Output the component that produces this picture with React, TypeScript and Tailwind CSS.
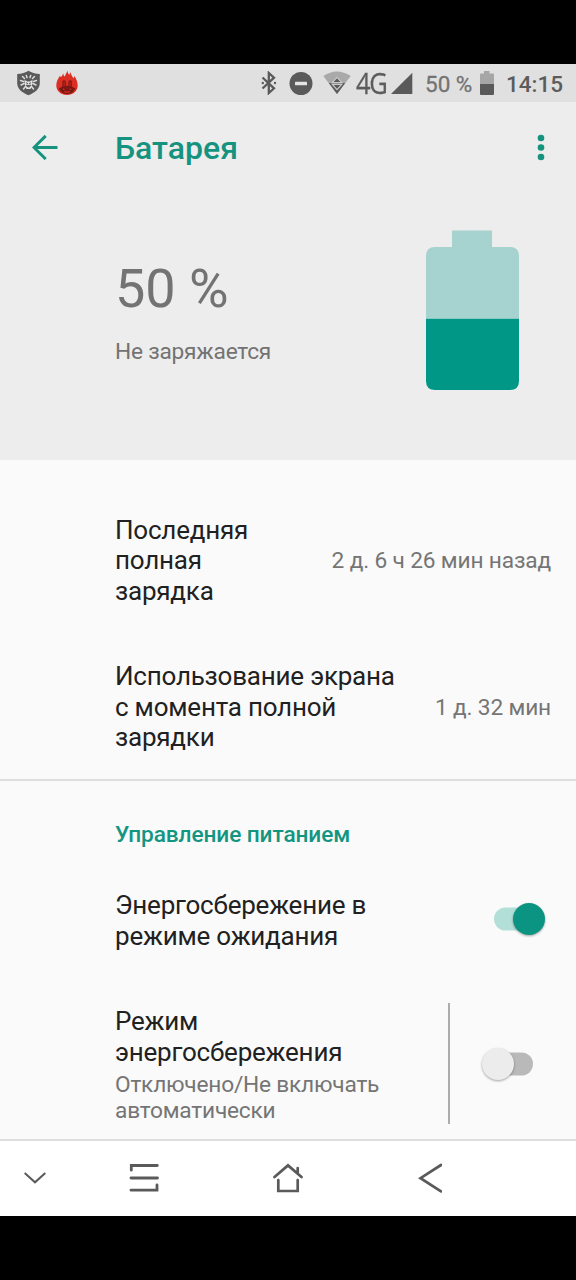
import React from "react";

function StatusBar() {
  return (
    <div className="flex h-[38px] items-center bg-[#e0e0e0] pl-4 text-[#5c5c5c]">
      <svg className="h-[26px] w-[26px] shrink-0" viewBox="0 0 26 26">
        <path d="M12.500.7C9.600 2.800 5.600 3.800 1.200 3.900V13c0 6 4.800 9.600 11.300 12.300C19 22.600 23.800 19 23.800 13V3.900C19.400 3.800 15.400 2.800 12.500.7Z" fill="#5a5a5a" />
        <path d="M6.500 6.500l2 2M18.500 6.500l-2 2M4.500 10.500l3 1M20.500 10.500l-3 1M5 15l3-1.500M20 15l-3-1.500M7.500 19l2-2.500M17.500 19l-2-2.500M10.300 5.500l.7 2M14.700 5.500l-.7 2" stroke="#dcdcdc" strokeWidth="1.500" strokeLinecap="round" />
        <path d="M8.500 10l3 1.500h2l3-1.500-.3 5-1.700 4h-4l-1.700-4Z" fill="#e4e4e4" />
        <path d="M10 12.800l2 .8M15 12.800l-2 .8M10 15.300q2.500 3.500 5 0Z" stroke="#5a5a5a" strokeWidth="1" fill="#5a5a5a" />
      </svg>
      <svg className="ml-[13px] h-[26px] w-6 shrink-0" viewBox="0 0 24 26">
        <path d="M12.500.6c-.8 2.500-2 3.800-2.700 5.800C8.900 6 8.300 4.800 8.200 3.200 7.600 5.200 6.800 6.200 5.800 7.200 5.400 6.800 5.200 6.200 5.100 5.600 3.200 8.500 1.300 11.500 1.300 15.500 1.300 21 6 25 12 25s10.700-4 10.700-9.500c0-3.500-1.400-6.500-3.200-9.500-.2 1-.6 1.700-1.100 2.200C17.500 6.500 15.900 5 15.500 2.300c-.7.800-1.100 1.800-1.200 2.700C13.200 4 12.500 2.400 12.500.6Z" fill="#dc2f24" />
        <path d="M8 17V12.500q0-1.500 1-1.500t1.200 1.500V17M14 17V12.500q.2-1.500 1.200-1.500t1 1.500V17" stroke="#7a1813" strokeWidth="1.300" fill="none" strokeLinecap="round" />
        <path d="M3.800 18.500q3.500-2.700 8.300-2.700t8.300 2.700q-2.500 5.500-8.300 5.500t-8.300-5.500Z" fill="#7a1813" />
        <path d="M8 18.700l1.500.8M16.200 18.700l-1.500.8M9 21.500q3 1.200 6 0" stroke="#dc2f24" strokeWidth="1.100" fill="none" />
      </svg>
      <div className="flex flex-1 items-center">
        <svg className="ml-[182px] h-6 w-[16px] shrink-0" viewBox="0 0 16 24">
          <path d="M1.500 6.500L13 17.300 7.800 22V2L13 6.700 1.500 17.500" fill="none" stroke="#5a5a5a" strokeWidth="2.300" />
          <circle cx="1.800" cy="12" r="1.200" fill="#5a5a5a" />
          <circle cx="14" cy="12" r="1.200" fill="#5a5a5a" />
        </svg>
        <svg className="ml-3 h-6 w-6 shrink-0" viewBox="0 0 24 24">
          <circle cx="12" cy="12.500" r="11.500" fill="#5a5a5a" />
          <rect x="6" y="10.700" width="12" height="3.600" rx=".6" fill="#e4e4e4" />
        </svg>
        <svg className="ml-[10px] h-6 w-7 shrink-0" viewBox="0 0 28 24">
          <path d="M.3 5Q14-4 27.700 5L14 23Z" fill="#a9a9a9" />
          <path d="M5.800 12h16.400L14 23Z" fill="#5a5a5a" />
          <path d="M14 6.300L18.700 11.600H9.300ZM9.300 13.300h9.400L14 18.600Z" fill="#5a5a5a" stroke="#c9c9c9" strokeWidth="1.200" />
        </svg>
        <span className="ml-[5px] w-[35px] shrink-0 whitespace-nowrap pb-px font-['Open_Sans',sans-serif] text-[29px] leading-none tracking-[-1.500px] [-webkit-text-stroke:0.300px_#5c5c5c] [transform-origin:left] [transform:scaleX(.88)]">4G</span>
        <svg className="h-[22px] w-[22px] shrink-0" viewBox="0 0 22 22">
          <path d="M21.300.7V22H0Z" fill="#5a5a5a" />
        </svg>
        <span className="ml-[12px] w-[55px] shrink-0 whitespace-nowrap pt-[2px] text-[22.500px] leading-none text-[#737373] [-webkit-text-stroke:0.300px_#737373]">50 %</span>
        <svg className="h-6 w-[14px] shrink-0" viewBox="0 0 14 24">
          <path d="M4 0h5.500v2.500H13q1 0 1 1V13H0V3.500q0-1 1-1h3Z" fill="#a6a6a6" />
          <path d="M0 13h14v10q0 1-1 1H1q-1 0-1-1Z" fill="#5a5a5a" />
        </svg>
        <span className="ml-3 shrink-0 whitespace-nowrap pt-[2px] text-[22.500px] font-medium leading-none">14:15</span>
      </div>
    </div>
  );
}

function Header() {
  return (
    <header className="flex h-[358px] flex-col bg-[#ededed]">
      <div className="flex h-[90px] items-center pl-8 pr-[31px] text-[#16937f]">
        <svg className="h-[26px] w-[26px] shrink-0" viewBox="0 0 26 26">
          <path d="M25.500 13.500H2M13.700 1.900L2 13.500l11.700 11.600" fill="none" stroke="currentColor" strokeWidth="2.900" />
        </svg>
        <h1 className="ml-[57px] flex-1 pt-px text-[32px] font-medium leading-none">Батарея</h1>
        <svg className="h-[27px] w-2 shrink-0" viewBox="0 0 8 27">
          <circle cx="4" cy="4" r="3.300" fill="currentColor" />
          <circle cx="4" cy="13.500" r="3.300" fill="currentColor" />
          <circle cx="4" cy="23" r="3.300" fill="currentColor" />
        </svg>
      </div>
      <div className="flex justify-between pl-[115px] pr-[57px] pt-[38px] text-[#737373]">
        <div className="pt-[31px]">
          <div className="whitespace-nowrap text-[54px] leading-[56px]">50 %</div>
          <div className="mt-[21px] whitespace-nowrap text-[22.700px] leading-[27px] tracking-[-0.220px]">Не заряжается</div>
        </div>
        <svg className="h-40 w-[93px]" viewBox="0 0 93 160">
          <path d="M26 .5h40V17H84q9 0 9 9v62.800H0V26q0-9 9-9h17Z" fill="#a6d2cf" />
          <path d="M0 88.800h93V151q0 9-9 9H9q-9 0-9-9Z" fill="#009787" />
        </svg>
      </div>
    </header>
  );
}

function InfoRow({ lines, value }: { lines: string[]; value: string }) {
  return (
    <div className="flex h-[146.700px] items-center justify-between pl-[115px] pr-[25px]">
      <div className="whitespace-nowrap text-[26px] leading-[30.500px] tracking-[-0.220px] text-[#212121]">
        {lines.map((l) => (
          <div key={l}>{l}</div>
        ))}
      </div>
      <div className="whitespace-nowrap text-[22.700px] leading-[27px] tracking-[-0.160px] text-[#757575]">{value}</div>
    </div>
  );
}

function Toggle({ on }: { on: boolean }) {
  return (
    <svg className="h-10 w-[54px] shrink-0 overflow-visible" viewBox="0 0 54 40">
      <rect x={on ? 1 : 2} y="8.500" width="50" height="23" rx="11.500" fill={on ? "#b3dfd9" : "#b9b9b9"} />
      <circle
        cx={on ? 36 : 17}
        cy="20"
        r="16"
        fill={on ? "#0b9482" : "#ececec"}
        className="drop-shadow-[0_1px_1px_rgba(0,0,0,0.350)]"
      />
    </svg>
  );
}

function NavBar() {
  return (
    <nav className="flex h-[77px] items-center border-t-2 border-[#dedede] bg-white pb-[2px] pl-6">
      <svg className="h-3 w-[22px] shrink-0" viewBox="0 0 22 12" fill="none" stroke="#5a5a5a" strokeWidth="2">
        <path d="M.7 1L11 10.300 21.300 1" />
      </svg>
      <svg className="ml-[83px] h-[30px] w-[30px] shrink-0" viewBox="0 0 30 30" fill="none" stroke="#5a5a5a" strokeWidth="2.800" strokeLinecap="round">
        <path d="M2.300 7.200V2.500H28.300M2 15H28.500M2 27.200H28V22" />
      </svg>
      <svg className="ml-[114px] h-[30px] w-[30px] shrink-0" viewBox="0 0 30 30" fill="none" stroke="#5a5a5a" strokeWidth="2.700" strokeLinecap="round">
        <path d="M1.500 14L15 2.400 28.500 14M24.700 10V5M5.300 17V28H24.700V17" />
      </svg>
      <svg className="ml-[115px] h-[30px] w-6 shrink-0" viewBox="0 0 24 30" fill="none" stroke="#5a5a5a" strokeWidth="2.700" strokeLinecap="round">
        <path d="M23 2L2.500 15.200 23 28.300" />
      </svg>
    </nav>
  );
}

export default function App() {
  return (
    <div className="flex h-[1280px] w-[576px] flex-col overflow-hidden bg-black py-16 font-['Roboto',sans-serif]">
      <StatusBar />
      <Header />
      <main className="flex h-[679px] flex-col bg-[#fafafa]">
        <div className="h-[321px] border-b-2 border-[#dedede] pt-[27px]">
          <InfoRow lines={["Последняя", "полная", "зарядка"]} value="2 д. 6 ч 26 мин назад" />
          <InfoRow lines={["Использование экрана", "с момента полной", "зарядки"]} value="1 д. 32 мин" />
        </div>
        <h2 className="mt-10 pl-[115px] text-[22.700px] font-medium leading-[27px] tracking-[-0.110px] text-[#129581]">Управление питанием</h2>
        <div className="mt-[42px] flex items-start justify-between pl-[115px] pr-[29px]">
          <div className="text-[26px] leading-[30.500px] tracking-[-0.220px] text-[#212121]">
            <div>Энергосбережение в</div>
            <div>режиме ожидания</div>
          </div>
          <div className="h-10 pt-[9px]">
            <Toggle on />
          </div>
        </div>
        <div className="mt-[52px] flex h-[121px] items-center pl-[115px]">
          <div className="w-[333px] self-start whitespace-nowrap pt-[3px]">
            <div className="text-[26px] leading-[30.500px] tracking-[-0.220px] text-[#212121]">
              <div>Режим</div>
              <div>энергосбережения</div>
            </div>
            <div className="mt-[4.500px] text-[22.700px] leading-[26.600px] tracking-[-0.210px] text-[#757575]">
              <div>Отключено/Не включать</div>
              <div>автоматически</div>
            </div>
          </div>
          <div className="mr-[31px] h-full w-[2px] bg-[#acacac]" />
          <Toggle on={false} />
        </div>
      </main>
      <NavBar />
    </div>
  );
}
